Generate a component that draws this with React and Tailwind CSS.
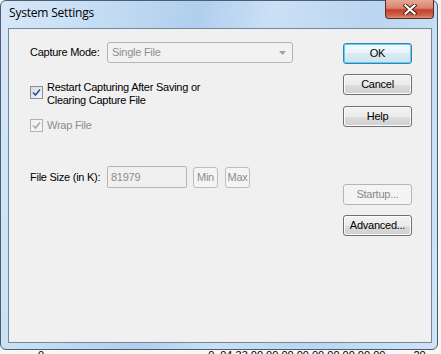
import React from "react";

const ui = "font-['Liberation_Sans',Arial,sans-serif] text-[11px] leading-[13px] tracking-[-0.25px]";

function Checkbox({ disabled }) {
	return (
		<div
			className={`w-[13px] h-[13px] shrink-0 border flex items-center justify-center ${
				disabled
					? "border-[#b1b1b1] bg-[#f4f4f4]"
					: "border-[#8e8f8f] bg-[linear-gradient(135deg,#d6d9de,#f8f8f8)]"
			}`}
		>
			<svg width="9" height="9" viewBox="0 0 9 9">
				<path
					d="M1 4.5 L3.5 7 L8 1.5"
					fill="none"
					stroke={disabled ? "#a9a9a9" : "#2a4fa8"}
					strokeWidth="1.6"
				/>
			</svg>
		</div>
	);
}

function Button({ children, variant }) {
	const base = "w-[69px] h-[21px] rounded-[3px] border flex items-center justify-center";
	if (variant === "default")
		return (
			<div className={`${base} border-[#3c7fb1] bg-[linear-gradient(#f2f9fd_0%,#eaf4fb_45%,#dbeaf4_50%,#cfe3f1_100%)] shadow-[inset_0_0_0_1px_#58d2f4] text-black`}>
				{children}
			</div>
		);
	if (variant === "disabled")
		return (
			<div className={`${base} border-[#b5b5b5] bg-[#f4f4f4] text-[#8a8a8a]`}>{children}</div>
		);
	return (
		<div className={`${base} border-[#707070] bg-[linear-gradient(#f2f2f2_0%,#ebebeb_50%,#dddddd_51%,#cfcfcf_100%)] shadow-[inset_0_0_0_1px_#fcfcfc] text-black`}>
			{children}
		</div>
	);
}

export default function App() {
	return (
		<div className="w-[441px] h-[354px] overflow-hidden bg-[#f7f7f7]">
			{/* WINDOW */}
			<div className="w-[438px] h-[350px] rounded-[6px] border border-[#4f5d6d] bg-[linear-gradient(100deg,#d6e8f9_0%,#c4ddf4_20%,#b0cfed_40%,#cae0f6_55%,#bbd6f1_75%,#d0e4f7_100%)] pl-[7px] pr-[5px] pb-[6px] flex flex-col">
				{/* TITLE BAR */}
				<div className="h-[27px] flex items-start justify-between">
					<span className="mt-[4px] pl-[1px] font-['Open_Sans',sans-serif] text-[12px] leading-[16px] tracking-[-0.2px] text-black">
						System Settings
					</span>
					<div className="-mt-[1px] -mr-[2px] w-[49px] h-[19px] rounded-b-[4px] border border-[#5b2a22] border-t-0 bg-[linear-gradient(#e9a796_0%,#d9826f_45%,#c5412a_55%,#cf6048_85%,#e0937c_100%)] flex items-center justify-center">
						<svg width="14" height="11" viewBox="0 0 14 11">
							<path d="M2.5 1.5 L11.5 9.5 M11.5 1.5 L2.5 9.5" stroke="#46201a" strokeWidth="4" strokeLinecap="square" />
							<path d="M2.5 1.5 L11.5 9.5 M11.5 1.5 L2.5 9.5" stroke="#ffffff" strokeWidth="2.2" strokeLinecap="square" />
						</svg>
					</div>
				</div>

				{/* CONTENT */}
				<div className={`flex-1 border border-[#75889b] bg-[#f0f0f0] flex ${ui}`}>
					{/* LEFT */}
					<div className="pl-[21px] pt-[13px] flex flex-col">
						<div className="flex items-center h-[21px]">
							<span className="w-[77px] text-black">Capture Mode:</span>
							<div className="w-[186px] h-[21px] rounded-[3px] border border-[#b5b5b5] bg-[#f2f2f2] flex items-center justify-between pl-[4px] pr-[6px]">
								<span className="text-[#8d8d8d]">Single File</span>
								<svg width="7" height="4" viewBox="0 0 7 4">
									<path d="M0 0 H7 L3.5 4 Z" fill="#a0a0a0" />
								</svg>
							</div>
						</div>

						<div className="flex mt-[18px]">
							<div className="mt-[5px]">
								<Checkbox />
							</div>
							<span className="ml-[4px] text-black">
								Restart Capturing After Saving or
								<br />
								Clearing Capture File
							</span>
						</div>

						<div className="flex items-center mt-[12px]">
							<Checkbox disabled />
							<span className="ml-[4px] text-[#8d8d8d]">Wrap File</span>
						</div>

						<div className="flex items-center mt-[34px] h-[22px]">
							<span className="w-[77px] text-black">File Size (in K):</span>
							<div className="w-[80px] h-[22px] rounded-[2px] border border-[#b5b5b5] bg-[#f0f0f0] pl-[3px] pt-[4px] text-[#8d8d8d]">
								81979
							</div>
							<div className="ml-[6px] w-[25px] h-[21px] rounded-[3px] border border-[#bdbdbd] bg-[#f4f4f4] flex items-center justify-center text-[#8d8d8d]">
								Min
							</div>
							<div className="ml-[7px] w-[25px] h-[21px] rounded-[3px] border border-[#bdbdbd] bg-[#f4f4f4] flex items-center justify-center text-[#8d8d8d]">
								Max
							</div>
						</div>
					</div>

					{/* RIGHT BUTTONS */}
					<div className="ml-auto mr-[19px] pt-[14px] flex flex-col">
						<Button variant="default">OK</Button>
						<div className="mt-[10px]">
							<Button>Cancel</Button>
						</div>
						<div className="mt-[11px]">
							<Button>Help</Button>
						</div>
						<div className="mt-[57px]">
							<Button variant="disabled">Startup...</Button>
						</div>
						<div className="mt-[10px]">
							<Button>Advanced...</Button>
						</div>
					</div>
				</div>
			</div>

			{/* DESKTOP BEHIND */}
			<div className="h-[4px] overflow-hidden font-['Liberation_Sans',sans-serif] text-[11px] leading-[13px] text-black">
				<div className="flex -mt-[1px]">
					<span className="ml-[38px]">0</span>
					<span className="ml-[164px]">0</span>
					<span className="ml-[6px]">04 33 00 00 00 00 00 00 00 00 00</span>
					<span className="ml-[28px]">20</span>
				</div>
			</div>
		</div>
	);
}
